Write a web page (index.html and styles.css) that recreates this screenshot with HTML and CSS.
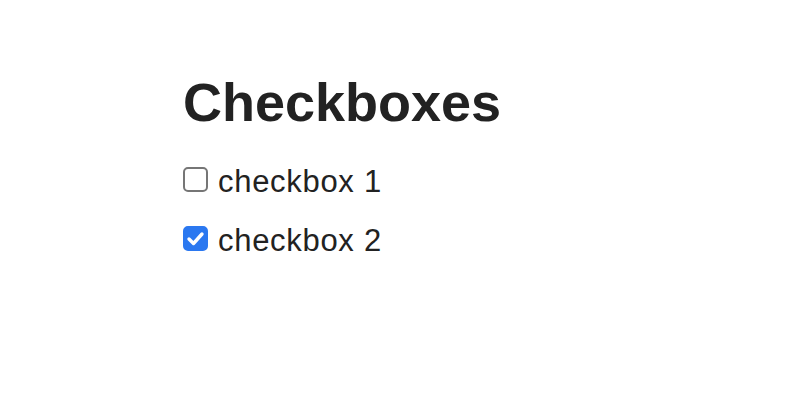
FILE: index.html
```html
<!DOCTYPE html>
<html>
<head>
<meta charset="utf-8">
<link rel="stylesheet" href="styles.css">
</head>
<body>
<main class="page">
  <h1 class="title">Checkboxes</h1>
  <form class="list">
    <label class="row"><span class="box"></span><span class="label">checkbox 1</span></label>
    <label class="row"><span class="box checked"><svg viewBox="0 0 25 25" width="25" height="25"><path d="M6 13 L10.5 17.5 L19 8" fill="none" stroke="#fff" stroke-width="3.4" stroke-linecap="round" stroke-linejoin="round"/></svg></span><span class="label">checkbox 2</span></label>
  </form>
</main>
</body>
</html>
```
FILE: styles.css
```css
html, body { margin: 0; padding: 0; background: #fff; }
body { font-family: "Liberation Sans", Arial, sans-serif; color: #222; }
.page { padding: 71px 0 0 183px; }
.title { margin: 0; font-size: 54px; font-weight: bold; line-height: 62px; }
.list { display: flex; flex-direction: column; gap: 17px; margin-top: 28px; }
.row { display: flex; align-items: flex-start; gap: 10px; font-size: 31px; line-height: 42px; height: 42px; letter-spacing: 0.7px; }
.box { width: 25px; height: 25px; margin-top: 6px; box-sizing: border-box; border: 2px solid #767676; border-radius: 5px; background: #fff; display: flex; flex-shrink: 0; }
.box.checked { background: #2b78f0; border-color: #2b78f0; }
.box svg { margin: -2px; }
```
